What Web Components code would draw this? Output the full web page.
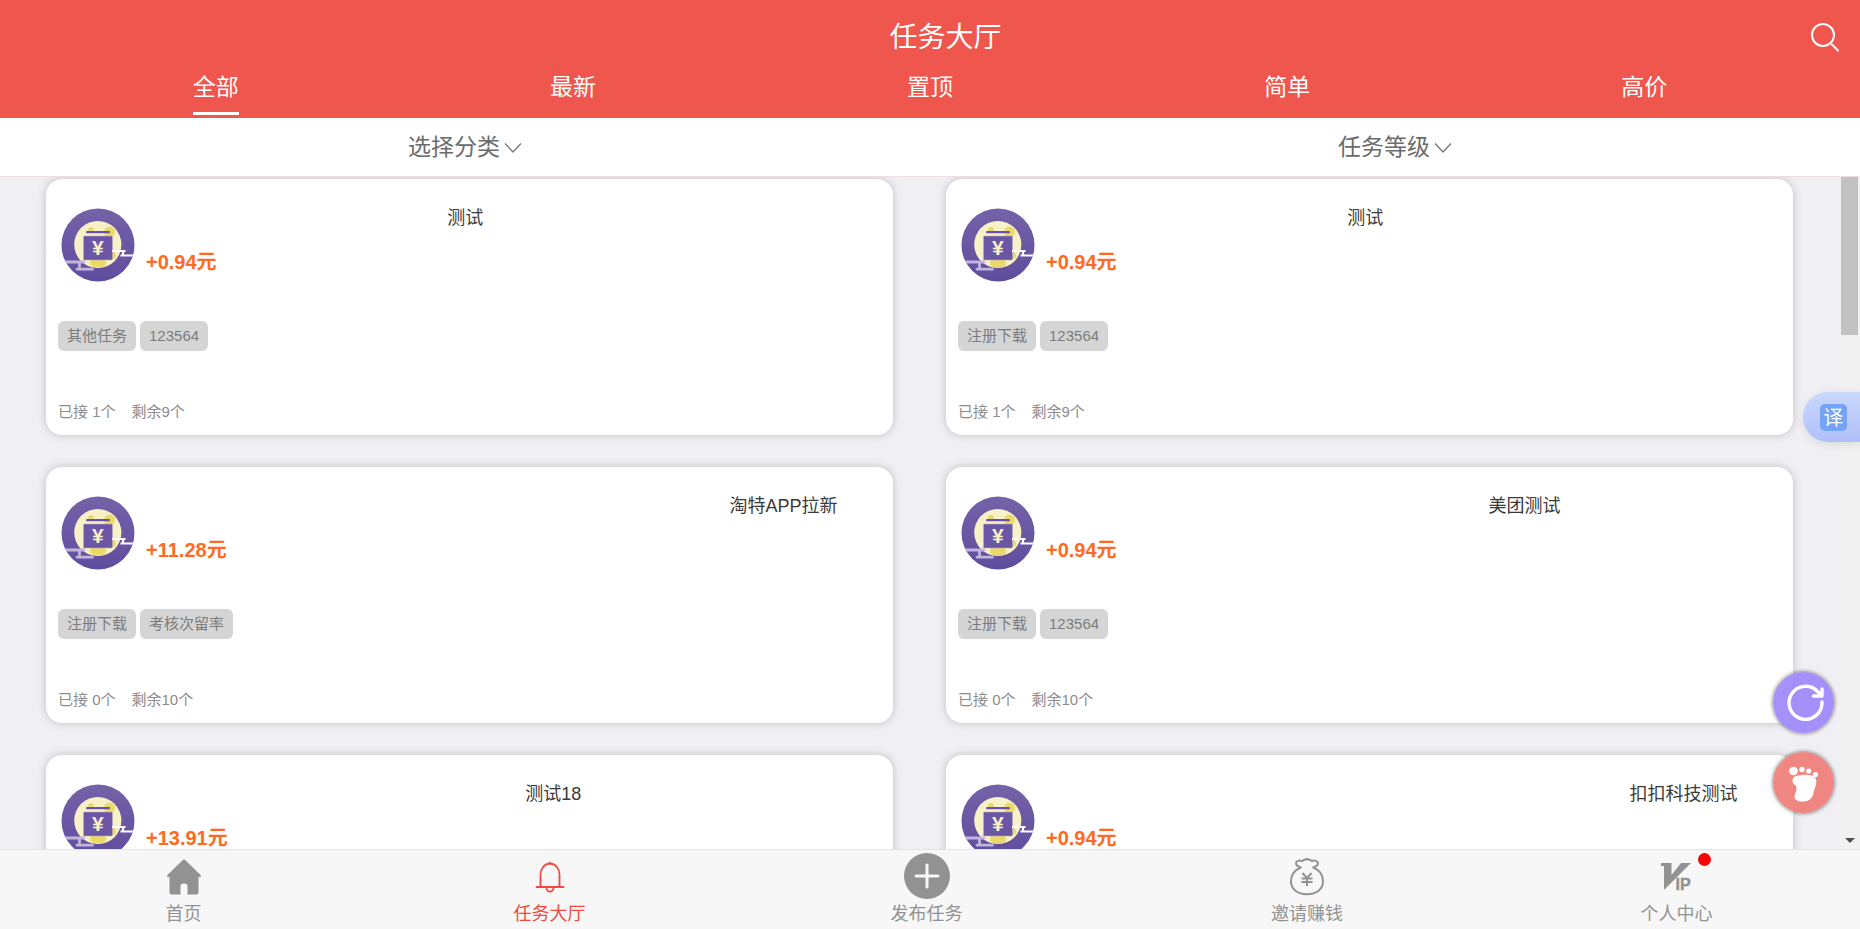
<!DOCTYPE html>
<html lang="zh-CN">
<head>
<meta charset="UTF-8">
<meta name="viewport" content="width=device-width, initial-scale=1">
<title>任务大厅</title>
<style>
    body {
        margin: 0;
        font-family: "Liberation Sans", "Noto Sans CJK SC", sans-serif;
        background: #efeff4;
    }
</style>
</head>
<body>
<task-hall></task-hall>

<script>
// Shared by every element: attach a shadow root and fill it from render()
class BaseElement extends HTMLElement {
    constructor() {
        super();
        this.attachShadow({ mode: 'open' });
    }

    connectedCallback() {
        this.shadowRoot.innerHTML = this.render();
    }
}

class HallHeader extends BaseElement {
    render() {
        return `
            <style>
                :host {
                    display: block;
                    background: #ef564d;
                    color: #fff;
                }
                .bar {
                    display: flex;
                    align-items: center;
                    height: 74px;
                    padding: 0 21px 0 80px;
                }
                h1 {
                    flex: 1;
                    margin: 0;
                    padding-top: 2px;
                    font-size: 28px;
                    font-weight: 400;
                    line-height: 40px;
                    text-align: center;
                }
                button {
                    padding: 0;
                    border: none;
                    background: none;
                    color: inherit;
                    font: inherit;
                    cursor: pointer;
                }
                svg {
                    display: block;
                }
                nav {
                    display: grid;
                    grid-template-columns: repeat(5, 1fr);
                    justify-items: center;
                    padding: 0 2%;
                    height: 44px;
                }
                nav button {
                    height: 41px;
                    padding-bottom: 12px;
                    box-sizing: border-box;
                    border-bottom: 3px solid transparent;
                    font-size: 23px;
                    line-height: 26px;
                }
                nav button.active {
                    border-color: #fff;
                }
            </style>
            <div class="bar">
                <h1>任务大厅</h1>
                <button aria-label="搜索">
                    <svg width="28" height="29" viewBox="0 0 28 29" fill="none" stroke="#fff" stroke-width="2" stroke-linecap="round">
                        <circle cx="12" cy="12" r="11"/>
                        <path d="M21 21.500l6 6"/>
                    </svg>
                </button>
            </div>
            <nav>
                <button class="active">全部</button>
                <button>最新</button>
                <button>置顶</button>
                <button>简单</button>
                <button>高价</button>
            </nav>
        `;
    }
}

class FilterBar extends BaseElement {
    render() {
        const select = (name) => `
            <label>
                <select aria-label="${name}"><option>${name}</option></select>
                <svg width="18" height="12" viewBox="0 0 18 12" fill="none" stroke="#777" stroke-width="1.300">
                    <path d="M1 1.500l8 8.500 8-8.500"/>
                </svg>
            </label>`;
        return `
            <style>
                :host {
                    display: grid;
                    grid-template-columns: 1fr 1fr;
                    background: #fff;
                    border-bottom: 1px solid #ecdfe1;
                }
                label {
                    display: flex;
                    justify-content: center;
                    align-items: center;
                    gap: 4px;
                    height: 58px;
                }
                svg {
                    margin-top: 2px;
                }
                select {
                    appearance: none;
                    padding: 0;
                    border: none;
                    background: none;
                    color: #6b6b6b;
                    font-family: inherit;
                    font-size: 23px;
                    line-height: 32px;
                }
            </style>
            ${select('选择分类')}
            ${select('任务等级')}
        `;
    }
}

class TaskCard extends BaseElement {
    renderTags() {
        if (!this.hasAttribute('tags')) return '';
        const tags = this.getAttribute('tags').split(',');
        return `<div class="tags">${tags.map((tag) => `<span>${tag}</span>`).join('')}</div>`;
    }

    renderCount() {
        if (!this.hasAttribute('taken')) return '';
        return `
            <div class="count">
                <span>已接 ${this.getAttribute('taken')}个</span>
                <span>剩余${this.getAttribute('left')}个</span>
            </div>`;
    }

    render() {
        return `
            <style>
                :host {
                    display: block;
                    padding: 28px 12px 13px;
                    background: #fff;
                    border-radius: 16px;
                    box-shadow: 0 0 10px rgba(0, 0, 0, 0.2);
                }
                .top {
                    display: flex;
                    gap: 11px;
                }
                .avatar {
                    flex: none;
                    margin: 1px 0 0 3px;
                }
                .info {
                    flex: 1;
                    min-width: 0;
                }
                /* the title runs along this line, --run is how far it got (0 to 1000) */
                .title {
                    overflow: hidden;
                    padding-left: calc(var(--run) * 100% / 1000);
                    color: #3a3a3a;
                    font-size: 18px;
                    line-height: 22px;
                    white-space: nowrap;
                }
                .price {
                    margin-top: 21px;
                    color: #ff6a22;
                    font-size: 20px;
                    font-weight: 700;
                    line-height: 24px;
                }
                .tags {
                    display: flex;
                    gap: 4px;
                    margin-top: 39px;
                }
                .tags span {
                    padding: 0 9px;
                    background: #d5d5d5;
                    border-radius: 6px;
                    color: #7c7c7c;
                    font-size: 15px;
                    line-height: 30px;
                }
                .count {
                    display: flex;
                    gap: 16px;
                    margin-top: 51px;
                    color: #8c8c8c;
                    font-size: 15px;
                    line-height: 20px;
                }
            </style>
            <div class="top">
                <svg class="avatar" width="74" height="74" viewBox="0 0 74 74">
                    <defs>
                        <linearGradient id="sky" x1="0" y1="0" x2="0" y2="1">
                            <stop offset="0" stop-color="#7562a8"/>
                            <stop offset="1" stop-color="#604c9e"/>
                        </linearGradient>
                        <clipPath id="disc"><circle cx="37" cy="37" r="36.500"/></clipPath>
                    </defs>
                    <g clip-path="url(#disc)">
                        <rect width="74" height="74" fill="url(#sky)"/>
                        <circle cx="36.800" cy="36.500" r="23.600" fill="#f8f1c8"/>
                        <g fill="#ecd96e">
                            <circle cx="30" cy="22" r="3"/>
                            <circle cx="48.500" cy="24" r="5.500"/>
                            <circle cx="51.500" cy="47.500" r="3.500"/>
                            <ellipse cx="37" cy="55" rx="8.500" ry="4.500"/>
                        </g>
                        <rect x="22.500" y="28" width="29" height="24" rx="1" fill="#6a56a4" stroke="#b9abb8" stroke-width=".6"/>
                        <rect x="25" y="23" width="24" height="2.200" rx="1" fill="#6a56a4"/>
                        <path d="M51 43h13.500M62 43v4M59.500 47.500h15" fill="none" stroke="#fff" stroke-width="2.200"/>
                        <path d="M3 54h20M18.500 54v7M16 61.200h15.500" fill="none" stroke="#c1b5df" stroke-width="2.800" stroke-linecap="round"/>
                    </g>
                    <text x="36.800" y="47" text-anchor="middle" font-size="21" font-weight="700" fill="#f8f1c8">¥</text>
                </svg>
                <div class="info">
                    <div class="title" style="--run: ${this.getAttribute('run')}"><slot></slot></div>
                    <div class="price">+${this.getAttribute('price')}元</div>
                </div>
            </div>
            ${this.renderTags()}
            ${this.renderCount()}
        `;
    }
}

class TaskList extends BaseElement {
    render() {
        return `
            <style>
                :host {
                    display: flex;
                    overflow: hidden;
                }
                .grid {
                    flex: 1;
                    display: grid;
                    grid-template-columns: 1fr 1fr;
                    grid-auto-rows: 256px;
                    align-content: start;
                    gap: 32px 53px;
                    padding: 2px 46px 32px;
                }
                .scroll {
                    display: flex;
                    flex-direction: column;
                    justify-content: space-between;
                    align-items: center;
                    width: 21px;
                    background: #f1f1f1;
                }
                .thumb {
                    width: 17px;
                    height: 158px;
                    background: #c1c1c1;
                }
                .down {
                    margin-bottom: 6px;
                    border: 5px solid transparent;
                    border-top-color: #505050;
                    border-bottom: none;
                }
            </style>
            <div class="grid"><slot></slot></div>
            <div class="scroll"><div class="thumb"></div><div class="down"></div></div>
        `;
    }
}

class TabBar extends BaseElement {
    render() {
        return `
            <style>
                :host {
                    display: grid;
                    grid-template-columns: 367fr 365fr 389fr 372fr 367fr;
                    background: #f7f7f7;
                    border-top: 1px solid #e2e2e2;
                }
                a {
                    display: flex;
                    flex-direction: column;
                    align-items: center;
                    height: 79px;
                    color: #929292;
                    font-size: 18px;
                    line-height: 26px;
                    text-decoration: none;
                }
                a.active {
                    color: #f0493f;
                }
                .icon {
                    position: relative;
                    display: flex;
                    justify-content: center;
                    align-items: center;
                    width: 46px;
                    height: 46px;
                    margin: 3px 0 2px;
                }
                .dot {
                    position: absolute;
                    top: 0;
                    right: -11px;
                    width: 13px;
                    height: 13px;
                    border-radius: 50%;
                    background: #f00;
                }
            </style>
            <a href="#home">
                <span class="icon">
                    <svg width="46" height="46" viewBox="0 0 46 46" fill="currentColor">
                        <path d="M21.600 7.200a2 2 0 0 1 2.800 0l15 14.600c1.200 1.200.500 2.200-.8 2.200H37.500v15.500a2 2 0 0 1-2 2H26.500v-8.500a2.500 2.500 0 0 0-2.500-2.500h-2a2.500 2.500 0 0 0-2.500 2.500v8.500H10.500a2 2 0 0 1-2-2V24H7.400c-1.300 0-2-1-.8-2.200z"/>
                    </svg>
                </span>首页
            </a>
            <a href="#hall" class="active">
                <span class="icon">
                    <svg width="46" height="46" viewBox="0 0 46 46" fill="none" stroke="currentColor" stroke-width="1.800" stroke-linecap="round">
                        <path d="M9.500 34h27M13.500 34V21.500a9.500 11 0 0 1 19 0V34M23 9.500v1.500M19.500 34.500a3.500 4.200 0 0 0 7 0"/>
                    </svg>
                </span>任务大厅
            </a>
            <a href="#publish">
                <span class="icon">
                    <svg width="46" height="46" viewBox="0 0 46 46">
                        <circle cx="23" cy="23" r="23" fill="currentColor"/>
                        <path d="M23 12v22M12 23h22" stroke="#f7f7f7" stroke-width="3" stroke-linecap="round"/>
                    </svg>
                </span>发布任务
            </a>
            <a href="#invite">
                <span class="icon">
                    <svg width="46" height="46" viewBox="0 0 46 46" fill="none" stroke="currentColor" stroke-width="2" stroke-linejoin="round">
                        <path d="M16.800 14.500c-2-1-4.800-1.500-4.800-4 0-2.800 3.500-3.500 6.200-2.300 1-2.200 2.500-1 4.800-2.200 2.300 1.200 3.800 0 4.800 2.200 2.700-1.200 6.200-.5 6.200 2.300 0 2.500-2.800 3-4.800 4C35 17 39 21.500 39 28c0 8.500-6.500 13.200-16 13.200S7 36.500 7 28c0-6.500 4-11 9.800-13.500z"/>
                        <path d="M18.500 20l4.500 5 4.500-5M17.500 25.500h11M17.500 29h11M23 25v8"/>
                    </svg>
                </span>邀请赚钱
            </a>
            <a href="#me">
                <span class="icon">
                    <svg width="46" height="46" viewBox="0 0 46 46" fill="currentColor">
                        <path d="M7 10h10.500v12L27 10h10L10 37V13H7z"/>
                        <text x="21.500" y="37" font-size="16" font-weight="700" stroke="currentColor" stroke-width=".4">IP</text>
                    </svg>
                    <span class="dot"></span>
                </span>个人中心
            </a>
        `;
    }
}

// Round button floating over the list, its colour comes from --tint
class FloatButton extends BaseElement {
    render() {
        return `
            <style>
                :host {
                    display: block;
                }
                button {
                    display: block;
                    width: 61px;
                    height: 61px;
                    padding: 0;
                    border: none;
                    border-radius: 50%;
                    background: var(--tint);
                    box-shadow: 0 0 4px rgba(0, 0, 0, 0.6);
                    cursor: pointer;
                }
            </style>
            <button aria-label="${this.getAttribute('label')}"><slot></slot></button>
        `;
    }
}

class TranslateTab extends BaseElement {
    render() {
        return `
            <style>
                :host {
                    display: block;
                }
                button {
                    display: flex;
                    align-items: center;
                    width: 57px;
                    height: 50px;
                    padding: 0 0 0 17px;
                    border: none;
                    border-radius: 25px 0 0 25px;
                    background: linear-gradient(#c9d8fb, #b0bffa);
                    box-shadow: 0 2px 10px rgba(0, 0, 0, 0.1);
                    cursor: pointer;
                }
                span {
                    width: 27px;
                    height: 27px;
                    border-radius: 5px;
                    background: #75a3f5;
                    color: #fff;
                    font: 20px/26px "Noto Sans CJK SC", sans-serif;
                    text-align: center;
                }
            </style>
            <button><span>译</span></button>
        `;
    }
}

class TaskHall extends BaseElement {
    render() {
        return `
            <style>
                :host {
                    display: flex;
                    flex-direction: column;
                    height: 100vh;
                }
                task-list {
                    flex: 1;
                    min-height: 0;
                }
                .floats {
                    position: fixed;
                    right: 26px;
                    bottom: 116px;
                    display: grid;
                    gap: 19px;
                }
                .refresh {
                    --tint: rgba(157, 136, 250, 0.92);
                }
                .foot {
                    --tint: rgba(239, 125, 118, 0.92);
                }
                svg {
                    display: block;
                    margin: auto;
                }
                translate-tab {
                    position: fixed;
                    right: 0;
                    top: 392px;
                }
            </style>
            <hall-header></hall-header>
            <filter-bar></filter-bar>
            <task-list>
                <task-card run="410" price="0.94" tags="其他任务,123564" taken="1" left="9">测试</task-card>
                <task-card run="410" price="0.94" tags="注册下载,123564" taken="1" left="9">测试</task-card>
                <task-card run="794" price="11.28" tags="注册下载,考核次留率" taken="0" left="10">淘特APP拉新</task-card>
                <task-card run="602" price="0.94" tags="注册下载,123564" taken="0" left="10">美团测试</task-card>
                <task-card run="516" price="13.91">测试18</task-card>
                <task-card run="794" price="0.94">扣扣科技测试</task-card>
            </task-list>
            <tab-bar></tab-bar>
            <translate-tab></translate-tab>
            <div class="floats">
                <float-button class="refresh" label="刷新">
                    <svg width="61" height="61" viewBox="0 0 61 61" fill="none" stroke="#fff" stroke-width="3.400" stroke-linecap="round" stroke-linejoin="round">
                        <path d="M49 30a16.500 16.500 0 1 1-4-10l3 3"/>
                        <path d="M49 17v7h-8.500"/>
                    </svg>
                </float-button>
                <float-button class="foot" label="足迹">
                    <svg width="61" height="61" viewBox="0 0 61 61" fill="#fff">
                        <circle cx="20.500" cy="19" r="4.300"/>
                        <circle cx="29" cy="17.500" r="2.700"/>
                        <circle cx="35.700" cy="19" r="2.600"/>
                        <circle cx="42.500" cy="22.500" r="2.600"/>
                        <path d="M25 23.500c5-1 10-.8 14 0 4 1 5 4.500 4 9-1 4-2 5-2.500 8.500C39.500 46 36 49.500 30 49.500c-6 0-9-2-8.500-5.500.500-3 2.500-5 2-8.500-.5-2.500-4.500-3.500-4-7.500.2-2.500 2.500-4 5.500-4.500z"/>
                    </svg>
                </float-button>
            </div>
        `;
    }
}

customElements.define('hall-header', HallHeader);
customElements.define('filter-bar', FilterBar);
customElements.define('task-card', TaskCard);
customElements.define('task-list', TaskList);
customElements.define('tab-bar', TabBar);
customElements.define('float-button', FloatButton);
customElements.define('translate-tab', TranslateTab);
customElements.define('task-hall', TaskHall);
</script>
</body>
</html>
